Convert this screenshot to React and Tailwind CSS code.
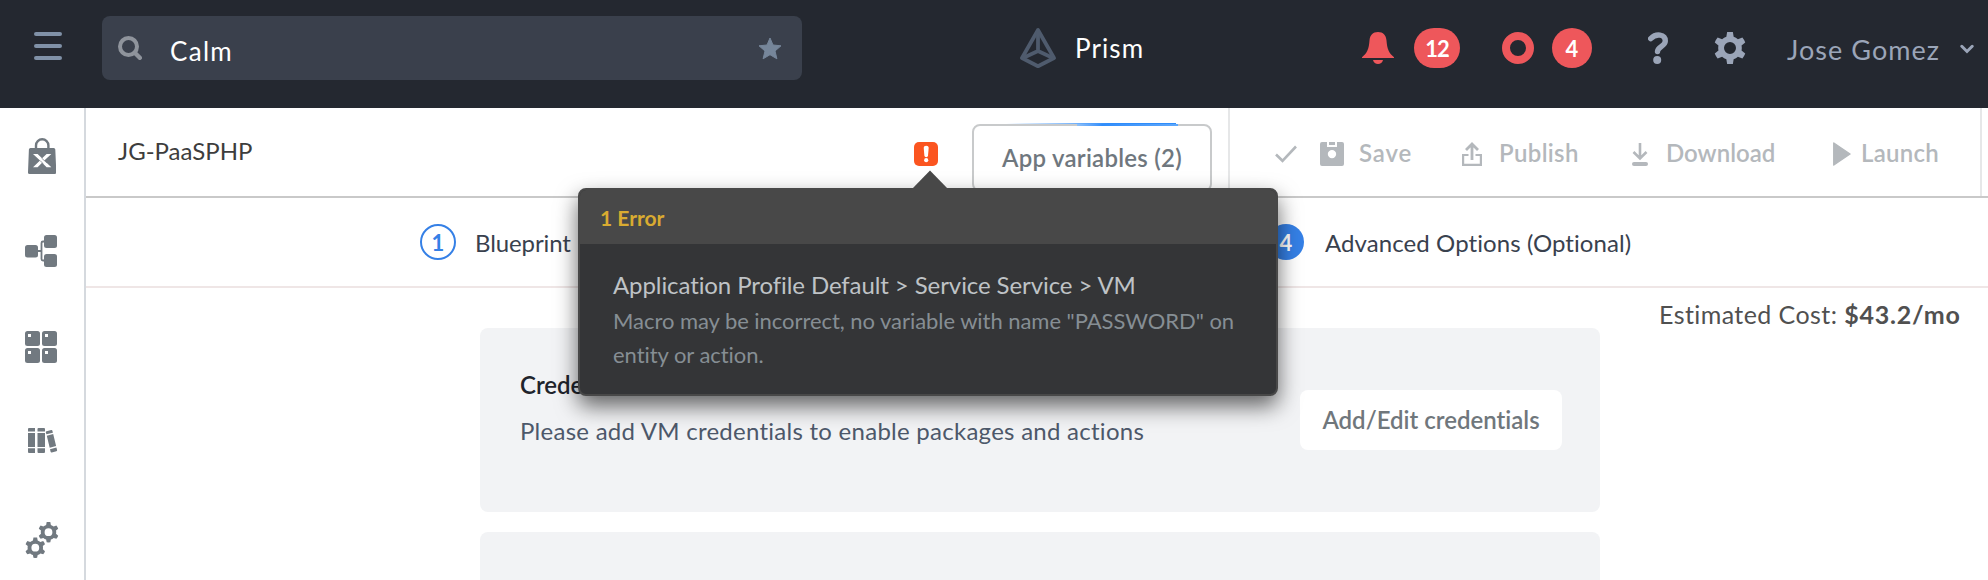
function gearPath(cx, cy, outer, root, hole, teeth, phase = 0) {
  const step = (Math.PI * 2) / teeth;
  const pt = (r, a) =>
    `${(cx + r * Math.cos(a)).toFixed(2)},${(cy + r * Math.sin(a)).toFixed(2)}`;
  let d = "";
  for (let i = 0; i < teeth; i++) {
    const a = phase + i * step - Math.PI / 2;
    d += `${i ? "L" : "M"}${pt(root, a - step * 0.3)}L${pt(outer, a - step * 0.17)}`;
    d += `A${outer},${outer} 0 0 1 ${pt(outer, a + step * 0.17)}L${pt(root, a + step * 0.3)}`;
    d += `A${root},${root} 0 0 1 ${pt(root, a + step * 0.7)}`;
  }
  d += `ZM${cx + hole},${cy}A${hole},${hole} 0 1 0 ${cx - hole},${cy}A${hole},${hole} 0 1 0 ${cx + hole},${cy}Z`;
  return d;
}

function Header() {
  return (
    <header className="flex h-[108px] shrink-0 items-start bg-[#242830] text-white">
      <div className="ml-[34px] mt-8 flex w-7 flex-col gap-2">
        <span className="h-1 rounded-full bg-[#8091a7]" />
        <span className="h-1 rounded-full bg-[#8091a7]" />
        <span className="h-1 rounded-full bg-[#8091a7]" />
      </div>

      <div className="ml-10 mt-4 flex h-16 w-[700px] items-center rounded-lg bg-[#3a404c] pl-4 pr-5">
        <svg className="size-6" viewBox="0 0 24 24" fill="none" stroke="#8f949c">
          <circle cx="10.5" cy="10.5" r="8.5" strokeWidth="4" />
          <path d="M17 17l4.8 4.8" strokeWidth="4.4" strokeLinecap="round" />
        </svg>
        <span className="ml-7 flex-1 pt-[5px] text-[26px] leading-9 tracking-[1.3px]">Calm</span>
        <svg className="h-[23px] w-6" viewBox="0 0 24 23" fill="#76869a" stroke="#76869a" strokeLinejoin="round">
          <path d="M12 1l3 7 8 .8-6 5.2 1.9 7.8L12 17.7 5.1 21.8 7 14 1 8.800l8-.8z" />
        </svg>
      </div>

      <svg className="ml-[218px] mt-7 h-10 w-9" viewBox="0 0 36 40" fill="none" stroke="#4f5b6d" strokeWidth="3.8" strokeLinejoin="round">
        <path d="M18 2L2 30l16 8.200L34 30z" />
        <path d="M18 3v20M3 30l15-7 15 7" />
      </svg>
      <span className="ml-[19px] mt-[30px] w-[70px] text-[26px] leading-9 tracking-[1.1px]">Prism</span>

      <svg className="ml-[217px] mt-8 size-8" viewBox="0 0 32 32" fill="#ee575b">
        <path d="M16 0c5.200 0 8 3 8.500 8.500.6 8 2.200 12.500 7.500 16.700V26H0v-.8C5.300 21 6.900 16.500 7.500 8.500 8 3 10.800 0 16 0z" />
        <path d="M11 28h10c-.6 2.500-2.600 4-5 4s-4.400-1.500-5-4z" />
      </svg>
      <span className="ml-5 mt-7 flex h-10 w-[46px] items-center justify-center rounded-full bg-[#ee575b] text-[22px] font-bold tracking-[-1px]">
        12
      </span>
      <span className="ml-[42px] mt-8 size-8 rounded-full border-8 border-[#ee575b]" />
      <span className="ml-[18px] mt-7 flex size-10 items-center justify-center rounded-full bg-[#ee575b] text-[22px] font-bold">
        4
      </span>

      <svg className="ml-14 mt-8 h-8 w-5" viewBox="0 0 20 32" fill="none" stroke="#9ba5b8">
        <path d="M2.700 6.600C8 1.200 17.300 2 17.300 9c0 5.400-7.800 5.400-7.800 10.600" strokeWidth="5.400" strokeLinecap="round" strokeLinejoin="round" />
        <circle cx="9.200" cy="28" r="4" fill="#9ba5b8" stroke="none" />
      </svg>
      <svg className="ml-[46px] mt-8 size-8" viewBox="0 0 32 32" fill="#9ba5b8" fillRule="evenodd">
        <path d={gearPath(16, 16, 16.2, 11.8, 6, 6)} />
      </svg>
      <span className="ml-[41px] mt-8 w-[160px] whitespace-nowrap text-[27px] leading-9 tracking-[1.05px] text-[#9ba5b8]">
        Jose Gomez
      </span>
      <svg className="ml-[13px] mt-[44px] h-[10px] w-[14px]" viewBox="0 0 14 10" fill="none" stroke="#9ba5b8" strokeWidth="3" strokeLinecap="round">
        <path d="M1.800 2.300L7 7.500l5.200-5.200" />
      </svg>
    </header>
  );
}

function Sidebar() {
  return (
    <nav className="flex w-[86px] shrink-0 flex-col border-r-2 border-[#d5d9de]">
      <svg className="ml-7 mt-[30px] h-9 w-7" viewBox="0 0 28 36" fill="none">
        <path d="M8 11V7.500a6.200 6.200 0 0 1 12.400 0V11" stroke="#717980" strokeWidth="2.400" />
        <path d="M2.500 10h23.200a1.600 1.600 0 0 1 1.600 1.500L28.300 34a1.700 1.700 0 0 1-1.700 2H1.600A1.600 1.600 0 0 1 0 34.200L.9 11.500A1.600 1.600 0 0 1 2.500 10z" fill="#717980" />
        <path d="M5 16h4.600l4.500 4.300L18.600 16h4.700l-7 6.500 7 6.700h-4.700l-4.500-4.400-4.500 4.400H5l7-6.700z" fill="#fff" />
        <path d="M13.500 20l5.500 5M15 25.500l-3-3" stroke="#717980" strokeWidth=".7" />
      </svg>
      <svg className="ml-[25px] mt-[61px] size-8" viewBox="0 0 32 32" fill="#717980">
        <rect x="0" y="10" width="13" height="12.500" rx="2.500" />
        <rect x="19" y="0" width="13" height="13" rx="2.500" />
        <rect x="19" y="19" width="13" height="13" rx="2.500" />
        <path d="M12 16h4.500M20 6.500h-2q-1.500 0-1.500 1.500v16q0 1.500 1.500 1.500h2" fill="none" stroke="#717980" strokeWidth="1.800" />
      </svg>
      <svg className="ml-[25px] mt-16 size-8" viewBox="0 0 32 32">
        <g fill="#717980">
          <rect x="0" y="0" width="15" height="15" rx="2.500" />
          <rect x="17" y="0" width="15" height="15" rx="2.500" />
          <rect x="0" y="17" width="15" height="15" rx="2.500" />
          <rect x="17" y="17" width="15" height="15" rx="2.500" />
        </g>
        <path d="M3 3h3v3H3zM20 3h3v3h-3zM3 20h3v3H3zM20 20h3v3h-3z" fill="#fff" />
      </svg>
      <svg className="ml-7 mt-[65px] h-[25px] w-[30px]" viewBox="0 0 30 25" fill="#717980">
        <path d="M1 0h6v3.600H0V1q0-1 1-1zM0 5h7v14H0zM0 20.300h7V25H1q-1 0-1-1z" />
        <path d="M10.500 0H16q1 0 1 1v2.600H9.500V1q0-1 1-1zM9.500 5H17v14H9.500zM9.500 20.300H17V24q0 1-1 1h-5.500q-1 0-1-1z" />
        <path d="M17.800 4.200q0-.8.800-1l4.600-1.200q1-.2 1.200.7l.5 2-6.500 1.600zM18.800 7.700l6.400-1.600 2.900 12-6.400 1.600zM22 21.200l6.400-1.600.7 2.400q.2.900-.7 1.200l-4.600 1.300q-.9.200-1.200-.7z" />
      </svg>
      <svg className="ml-[25px] mt-[69px] h-9 w-[34px]" viewBox="0 0 34 36" fill="#717980" fillRule="evenodd">
        <path d={gearPath(23.5, 10.2, 10.3, 7.7, 3.9, 6)} />
        <path d={gearPath(10.3, 25.7, 10.3, 7.7, 3.9, 6)} />
      </svg>
    </nav>
  );
}

function Toolbar() {
  return (
    <div className="flex h-[90px] shrink-0 items-start border-b-2 border-[#c9c9c9]">
      <span className="ml-8 mt-[27px] w-[796px] text-[24px] leading-[32px] text-[#3d3d3d]">JG-PaaSPHP</span>
      <svg className="mt-[34px] size-6" viewBox="0 0 24 24">
        <rect width="24" height="24" rx="5" fill="#fb5520" />
        <path d="M9.700 5.800q0-2 2.500-2t2.500 2l-.7 8q-.2 1.400-1.800 1.400t-1.800-1.400z" fill="#fff" />
        <circle cx="12.200" cy="18.200" r="2.100" fill="#fff" />
      </svg>
      <div className="relative ml-[34px] mt-4 flex h-[68px] w-60 items-center justify-center rounded-lg border-2 border-[#c8cacb] text-[24px] font-semibold tracking-[0.25px] text-[#6f777e]">
        <span className="absolute -top-[3px] left-8 h-px w-[170px] bg-linear-to-r from-transparent to-[#2f8dfb] to-60%" />
        <span className="absolute -top-[2px] left-[103px] h-0.5 w-[101px] bg-linear-to-r from-[#8fc0f7] via-[#2f8dfb] via-25% to-[#5ea7fa]" />
        App variables (2)
      </div>
      <div className="ml-4 flex h-[88px] w-[754px] items-start border-x-2 border-[#e6e7e8] text-[24px] font-semibold leading-[32px] text-[#b4b8bc]">
        <svg className="ml-[45px] mt-[37px] h-[18px] w-[22px]" viewBox="0 0 22 18" fill="none" stroke="#b4b8bc" strokeWidth="2.600">
          <path d="M1 9.500l6.500 6.300L21 1.500" />
        </svg>
        <svg className="ml-[23px] mt-[34px] size-6" viewBox="0 0 24 24" fill="#b4b8bc" fillRule="evenodd">
          <path d="M2 0h5v5h10V0h5q2 0 2 2v20q0 2-2 2H2q-2 0-2-2V2q0-2 2-2zM12 7.900a4.200 4.200 0 1 0 0 8.400 4.200 4.200 0 0 0 0-8.400z" />
          <path d="M9 0h6v3H9z" />
        </svg>
        <span className="ml-[15px] mt-[29px] w-[84px] tracking-[0.9px]">Save</span>
        <svg className="ml-[19px] mt-[34px] h-6 w-5" viewBox="0 0 20 24" fill="none" stroke="#b4b8bc" strokeWidth="2.200">
          <path d="M6.500 13H1.100v9.900h17.800V13h-5.400" />
          <path d="M10 18V2M4 8l6-6 6 6" strokeWidth="2.800" />
        </svg>
        <span className="ml-[17px] mt-[29px] w-[112px] tracking-[0.35px]">Publish</span>
        <svg className="ml-[21px] mt-[34px] h-6 w-4" viewBox="0 0 16 24" fill="none" stroke="#b4b8bc" strokeLinecap="round">
          <path d="M8 1v15M1.500 10L8 16.500 14.500 10" strokeWidth="2.600" strokeLinecap="butt" />
          <path d="M2 22h12" strokeWidth="4" />
        </svg>
        <span className="ml-[18px] mt-[29px] w-[140px]">Download</span>
        <svg className="ml-[27px] mt-[34px] h-6 w-[18px]" viewBox="0 0 18 24" fill="#b4b8bc" stroke="#b4b8bc" strokeWidth="1.500" strokeLinejoin="round">
          <path d="M.8 1L17 12 .8 23z" />
        </svg>
        <span className="ml-2.5 mt-[29px] tracking-[0.25px]">Launch</span>
      </div>
    </div>
  );
}

function Steps() {
  return (
    <div className="flex h-[90px] shrink-0 items-center border-b-2 border-[#efe6e6] pl-[334px] text-[24px] text-[#39414e]">
      <span className="flex size-9 items-center justify-center rounded-full border-2 border-[#3580e6] text-[22px] font-bold text-[#3580e6]">
        1
      </span>
      <span className="ml-[19px] w-[793px] pt-0.5 tracking-[-0.1px]">Blueprint</span>
      <span className="flex size-9 items-center justify-center rounded-full bg-[#3580e6] text-[22px] font-bold text-white">
        4
      </span>
      <span className="ml-[21px] pt-0.5 tracking-[0.08px]">Advanced Options (Optional)</span>
    </div>
  );
}

function ErrorPopover() {
  return (
    <div className="absolute left-[578px] top-[188px] w-[700px] rounded-lg border-2 border-[#484848] bg-[#343537] shadow-[0_10px_22px_rgba(0,0,0,0.6)]">
      <svg className="absolute -top-5 left-[332px] h-[19px] w-9" viewBox="0 0 36 19" fill="#484848">
        <path d="M18 .5L36 19H0z" />
      </svg>
      <div className="h-[54px] rounded-t-md bg-[#484848] pl-5 pt-[13px] text-[21px] font-bold leading-[30px] text-[#d9ab31]">
        1 Error
      </div>
      <div className="h-[150px] pl-[33px] pt-[23px]">
        <div className="text-[24px] leading-9 tracking-[-0.09px] text-[#bfc3c6]">
          Application Profile Default &gt; Service Service &gt; VM
        </div>
        <div className="mt-px w-[640px] text-[22px] leading-[34px] tracking-[-0.05px] text-[#868e94]">
          Macro may be incorrect, no variable with name "PASSWORD" on entity or action.
        </div>
      </div>
    </div>
  );
}

export default function App() {
  return (
    <div className="relative flex h-[580px] w-[1988px] flex-col overflow-hidden bg-white font-[Lato,sans-serif] [font-variant-ligatures:none]">
      <Header />
      <div className="flex min-h-0 flex-1">
        <Sidebar />
        <main className="flex min-w-0 flex-1 flex-col">
          <Toolbar />
          <Steps />
          <div className="flex items-start">
            <div className="ml-[394px] mt-10 flex w-[1120px] flex-col gap-5">
              <section className="flex h-[184px] items-start rounded-lg bg-[#f2f3f5] pl-10 pr-[38px]">
                <div className="flex-1 pt-[41px] text-[24px]">
                  <h2 className="font-semibold leading-[32px] text-[#1f242c]">Credentials</h2>
                  <p className="mt-3.5 leading-[32px] tracking-[0.26px] text-[#4d586a]">
                    Please add VM credentials to enable packages and actions
                  </p>
                </div>
                <button className="mt-[62px] h-[60px] w-[262px] rounded-lg bg-white text-[24px] font-semibold text-[#70777c]">
                  Add/Edit credentials
                </button>
              </section>
              <section className="h-[184px] rounded-lg bg-[#f2f3f5]" />
            </div>
            <div className="ml-[59px] mt-2.5 whitespace-nowrap text-[25px] leading-[32px] tracking-[0.42px] text-[#505050]">
              Estimated Cost: <b className="font-bold tracking-[0.8px]">$43.2/mo</b>
            </div>
          </div>
        </main>
      </div>
      <ErrorPopover />
    </div>
  );
}
